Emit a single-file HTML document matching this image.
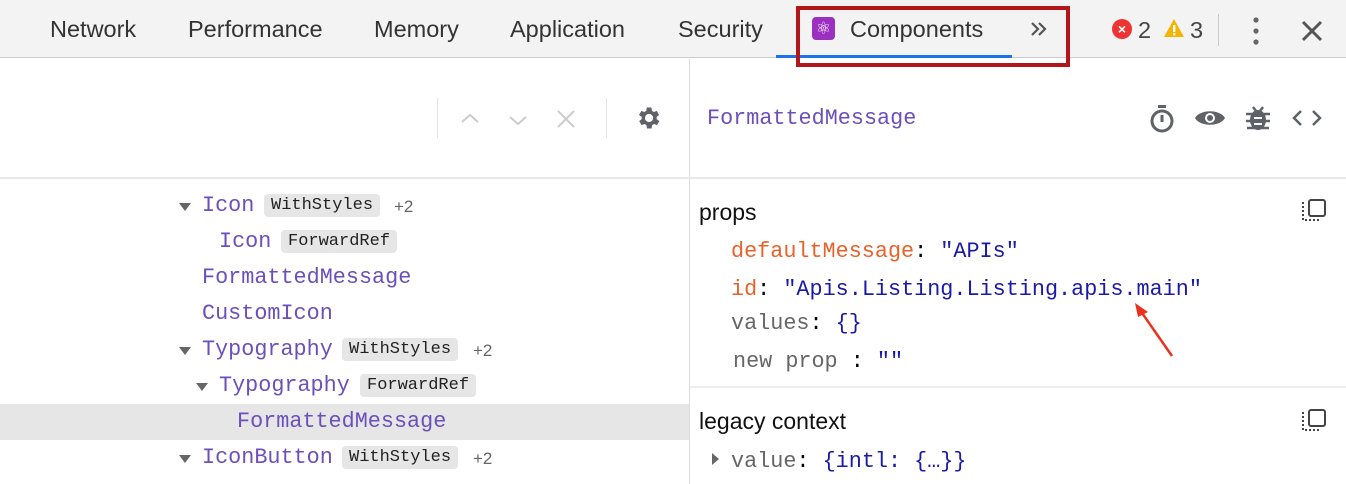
<!DOCTYPE html>
<html><head><style>
*{margin:0;padding:0;box-sizing:border-box}
body{width:1346px;height:484px;overflow:hidden;background:#fff;font-family:"Liberation Sans",sans-serif;position:relative}
.a{position:absolute;white-space:nowrap}
.tab{font-size:23.5px;color:#333;top:16px}
.m{font-family:"Liberation Mono",monospace;font-size:21.8px}
.p{color:#6b4fbb}
.badge{background:#e6e6e6;border-radius:4px;font-size:17px;color:#222;padding:2px 7px;font-family:"Liberation Mono",monospace}
.plus{font-size:17px;color:#666}
.tri{width:0;height:0;border-left:6px solid transparent;border-right:6px solid transparent;border-top:8px solid #666}
</style></head><body>
<div class="a" style="left:0;top:0;width:1346px;height:58px;background:#f3f3f3;border-bottom:1px solid #ccc"></div>
<div class="a tab" style="left:50px">Network</div>
<div class="a tab" style="left:188px">Performance</div>
<div class="a tab" style="left:374px">Memory</div>
<div class="a tab" style="left:510px">Application</div>
<div class="a tab" style="left:678px">Security</div>
<div class="a" style="left:776px;top:55px;width:236px;height:3px;background:#1a73e8"></div>
<div class="a" style="left:812px;top:17px;width:23px;height:23px;background:#9b30c0;border-radius:4px;color:#fff;font-size:17px;text-align:center;line-height:23px">⚛</div>
<div class="a tab" style="left:850px">Components</div>
<svg class="a" style="left:1030px;top:21px" width="18" height="16"><path d="M2 2L8 8L2 14M9 2L15 8L9 14" stroke="#555" stroke-width="2.2" fill="none"/></svg>
<div class="a" style="left:796px;top:6px;width:274px;height:61px;border:4px solid #b0161a"></div>
<div class="a" style="left:1112px;top:19px;width:20px;height:20px;border-radius:50%;background:#e33;color:#fff;font-size:14px;text-align:center;line-height:20px;font-weight:bold">×</div>
<div class="a tab" style="left:1138px;top:17px;color:#444">2</div>
<svg class="a" style="left:1163px;top:18px" width="22" height="20"><polygon points="11,1 21,19 1,19" fill="#f4b400"/><rect x="10" y="7" width="2.4" height="7" fill="#fff"/><rect x="10" y="15" width="2.4" height="2.4" fill="#fff"/></svg>
<div class="a tab" style="left:1190px;top:17px;color:#444">3</div>
<div class="a" style="left:1218px;top:14px;width:1px;height:32px;background:#ccc"></div>
<svg class="a" style="left:1250px;top:16px" width="12" height="30"><circle cx="6" cy="4" r="2.6" fill="#666"/><circle cx="6" cy="15" r="2.6" fill="#666"/><circle cx="6" cy="26" r="2.6" fill="#666"/></svg>
<svg class="a" style="left:1301px;top:20px" width="22" height="22"><path d="M2 2L20 20M20 2L2 20" stroke="#555" stroke-width="3"/></svg>

<div class="a" style="left:689px;top:59px;width:1px;height:425px;background:#ddd"></div>
<div class="a" style="left:0;top:177px;width:1346px;height:2px;background:#e8e8e8"></div>
<div class="a" style="left:437px;top:98px;width:1px;height:40px;background:#e3e3e3"></div>
<div class="a" style="left:606px;top:98px;width:1px;height:40px;background:#e3e3e3"></div>
<svg class="a" style="left:458px;top:108px" width="120" height="22"><path d="M4 14L12 7L20 14" stroke="#ccc" stroke-width="2" fill="none"/><path d="M52 9L60 16L68 9" stroke="#ccc" stroke-width="2" fill="none"/><path d="M100 3L116 19M116 3L100 19" stroke="#ccc" stroke-width="2"/></svg>
<svg class="a" style="left:634px;top:104px" width="28" height="28" viewBox="0 0 24 24"><path fill="#5f6368" d="M19.4 13a7.5 7.5 0 000-2l2.1-1.6-2-3.5-2.5 1a7 7 0 00-1.7-1L14.9 3h-4l-.4 2.9a7 7 0 00-1.7 1l-2.5-1-2 3.5L6.6 11a7.5 7.5 0 000 2l-2.1 1.6 2 3.5 2.5-1a7 7 0 001.7 1l.4 2.9h4l.4-2.9a7 7 0 001.7-1l2.5 1 2-3.5zM12.9 15.5a3.5 3.5 0 110-7 3.5 3.5 0 010 7z"/></svg>

<div class="a m p" style="left:707px;top:106px">FormattedMessage</div>
<svg class="a" style="left:1148px;top:104px" width="28" height="30"><rect x="10" y="1" width="8" height="3" fill="#5f6368"/><circle cx="14" cy="17" r="10" stroke="#5f6368" stroke-width="3" fill="none"/><path d="M14 11v7" stroke="#5f6368" stroke-width="3"/></svg>
<svg class="a" style="left:1194px;top:107px" width="32" height="22"><path d="M1 11C6 2 26 2 31 11C26 20 6 20 1 11Z" fill="#5f6368"/><circle cx="16" cy="11" r="5" fill="#fff"/><circle cx="16" cy="11" r="3" fill="#5f6368"/></svg>
<svg class="a" style="left:1244px;top:104px" width="28" height="28"><ellipse cx="14" cy="16" rx="8" ry="10" fill="#5f6368"/><path d="M2 10h24M2 17h24M3 24h22M9 3l3 4M19 3l-3 4" stroke="#5f6368" stroke-width="2.5"/><path d="M10 14h8M10 20h8" stroke="#fff" stroke-width="2"/></svg>
<svg class="a" style="left:1292px;top:108px" width="30" height="20"><path d="M9 3L2 10L9 17M21 3L28 10L21 17" stroke="#5f6368" stroke-width="2.5" fill="none"/></svg>

<!-- tree -->
<div class="a" style="left:0;top:404px;width:689px;height:36px;background:#e6e6e6"></div>
<div class="a tri" style="left:179px;top:203px"></div>
<div class="a m p" style="left:202px;top:193px">Icon</div>
<div class="a badge" style="left:264px;top:194px">WithStyles</div>
<div class="a plus" style="left:394px;top:197px">+2</div>
<div class="a m p" style="left:219px;top:229px">Icon</div>
<div class="a badge" style="left:281px;top:230px">ForwardRef</div>
<div class="a m p" style="left:202px;top:265px">FormattedMessage</div>
<div class="a m p" style="left:202px;top:301px">CustomIcon</div>
<div class="a tri" style="left:179px;top:347px"></div>
<div class="a m p" style="left:202px;top:337px">Typography</div>
<div class="a badge" style="left:342px;top:338px">WithStyles</div>
<div class="a plus" style="left:473px;top:341px">+2</div>
<div class="a tri" style="left:196px;top:383px"></div>
<div class="a m p" style="left:219px;top:373px">Typography</div>
<div class="a badge" style="left:360px;top:374px">ForwardRef</div>
<div class="a m p" style="left:237px;top:409px">FormattedMessage</div>
<div class="a tri" style="left:179px;top:455px"></div>
<div class="a m p" style="left:202px;top:445px">IconButton</div>
<div class="a badge" style="left:342px;top:446px">WithStyles</div>
<div class="a plus" style="left:473px;top:449px">+2</div>

<!-- props -->
<div class="a" style="left:699px;top:199px;font-size:23px;color:#111">props</div>
<svg class="a" style="left:1301px;top:198px" width="26" height="24"><rect x="8" y="2" width="16" height="16" rx="2" stroke="#444" stroke-width="2" fill="none"/><path d="M2 4v18h18" stroke="#444" stroke-width="2" stroke-dasharray="2 2" fill="none"/></svg>
<div class="a m" style="left:731px;top:239px"><span style="color:#e8622a">defaultMessage</span>:  <span style="color:#1a1aa6">"APIs"</span></div>
<div class="a m" style="left:731px;top:277px"><span style="color:#e8622a">id</span>:  <span style="color:#1a1aa6">"Apis.Listing.Listing.apis.main"</span></div>
<div class="a m" style="left:731px;top:311px"><span style="color:#666">values</span>:  <span style="color:#1a1aa6">{}</span></div>
<div class="a m" style="left:733px;top:349px"><span style="color:#666">new prop</span> :  <span style="color:#1a1aa6">""</span></div>
<svg class="a" style="left:1130px;top:300px" width="50" height="60"><path d="M42 56L10 10" stroke="#e8321e" stroke-width="2.5"/><polygon points="5,3 18,12 8,17" fill="#e8321e"/></svg>
<div class="a" style="left:690px;top:386px;width:656px;height:2px;background:#eee"></div>
<div class="a" style="left:699px;top:408px;font-size:23px;color:#111">legacy context</div>
<svg class="a" style="left:1301px;top:408px" width="26" height="24"><rect x="8" y="2" width="16" height="16" rx="2" stroke="#444" stroke-width="2" fill="none"/><path d="M2 4v18h18" stroke="#444" stroke-width="2" stroke-dasharray="2 2" fill="none"/></svg>
<div class="a" style="left:712px;top:453px;width:0;height:0;border-top:6px solid transparent;border-bottom:6px solid transparent;border-left:7px solid #666"></div>
<div class="a m" style="left:731px;top:449px"><span style="color:#666">value</span>: <span style="color:#1a1aa6">{intl: {…}}</span></div>
</body></html>
